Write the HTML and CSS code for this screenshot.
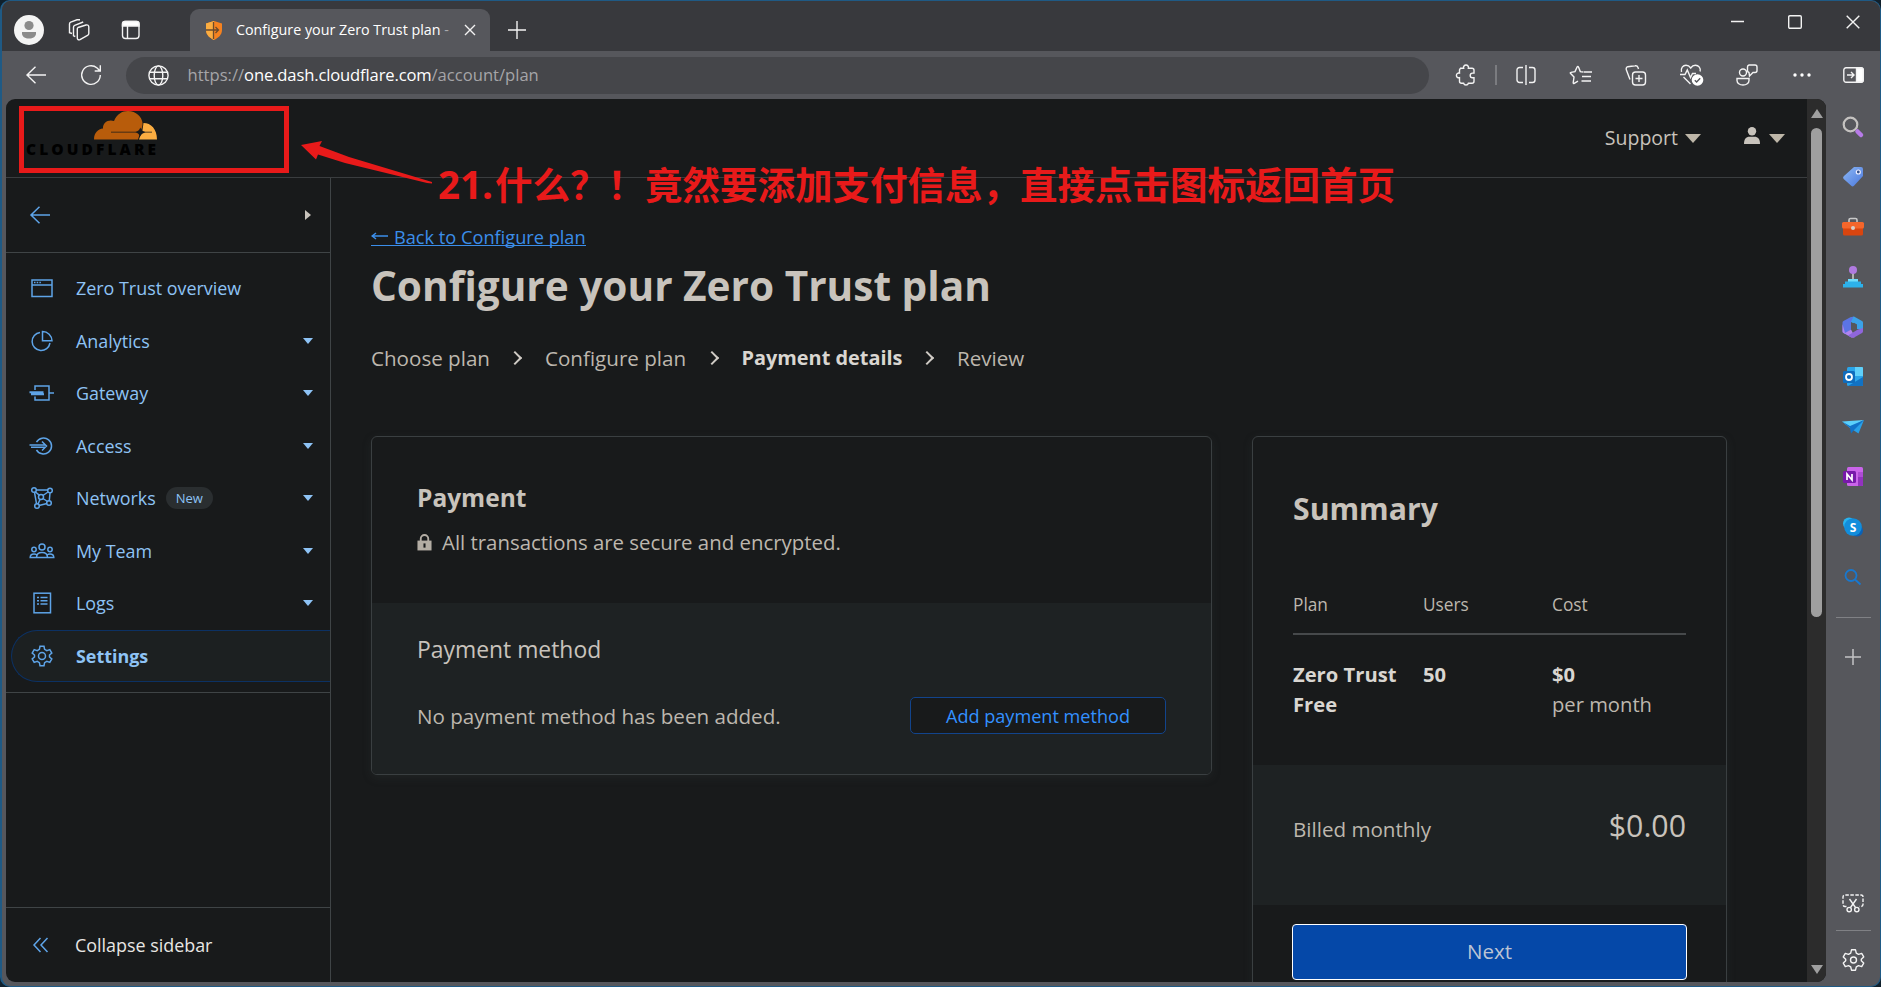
FILE: index.html
```
<!DOCTYPE html>
<html lang="en">
<head>
<meta charset="utf-8">
<title>Configure your Zero Trust plan</title>
<link rel="stylesheet" href="styles.css">
</head>
<body>
<div class="window">
  <header class="titlebar">
    <div class="tb-cell tb-avatar"><svg width="30" height="30" viewBox="0 0 30 30"><circle cx="15" cy="15" r="15" fill="#f4f4f4"/><circle cx="15" cy="10.500" r="4.600" fill="#8b8b8b"/><path d="M8 17h14v1.500c0 3-3 5-7 5s-7-2-7-5z" fill="#8b8b8b"/></svg></div>
    <div class="tb-cell tb-work"><svg class="ln" width="22" height="22" viewBox="0 0 22 22"><path d="M10 8.500l8-2.500c1.800-.4 2.800.3 2.800 2v6.400a2 2 0 0 1-1.300 1.900l-7.500 4.400c-1.500.6-2.700-.2-2.700-1.800V10a1.500 1.500 0 0 1 .7-1.500zM7.300 17.500l-1.800-.7V8.200a2 2 0 0 1 1.200-1.900l8.500-3.300M4 14.500l-2.500-.8V5a2 2 0 0 1 1.200-1.900L9 .8h3"/></svg></div>
    <div class="tb-cell tb-vert"><svg class="ln" width="20" height="20" viewBox="0 0 20 20"><rect x="1.500" y="1.500" width="16.500" height="17" rx="3"/><path d="M1.500 6V3.500a2 2 0 0 1 2-2h12.500a2 2 0 0 1 2 2V6z" fill="#fff"/><path d="M6.500 6v12"/></svg></div>
    <div class="tab">
      <svg width="16" height="19" viewBox="0 0 16 19"><path d="M8 0l8 2.500V9c0 5-4 8-8 10C4 17 0 14 0 9V2.500z" fill="#f6821f"/><path d="M8 0v19C4 17 0 14 0 9V2.500z" fill="#fbad41"/><path d="M0 9h12M9.500 6l3 3-3 3M7.500 1v17" fill="none" stroke="#6b4a2c" stroke-width="1.300"/></svg>
      <span class="tab-title">Configure your Zero Trust plan <span>-</span></span>
      <svg class="ln" width="12" height="12" viewBox="0 0 12 12"><path d="M1 1l10 10M11 1L1 11"/></svg>
    </div>
    <div class="tb-plus"><svg class="ln" width="18" height="18" viewBox="0 0 18 18"><path d="M9 0v18M0 9h18"/></svg></div>
    <div class="win-controls">
      <svg class="ln" width="13" height="13" viewBox="0 0 13 13"><path d="M0 6.500h13"/></svg>
      <svg class="ln" width="14" height="14" viewBox="0 0 14 14"><rect x=".7" y=".7" width="12.600" height="12.600" rx="1.200"/></svg>
      <svg class="ln" width="14" height="14" viewBox="0 0 14 14"><path d="M.7.7l12.600 12.600M13.300.7L.7 13.300"/></svg>
    </div>
  </header>

  <div class="toolbar">
    <div class="tool-back"><svg class="ln" width="20" height="18" viewBox="0 0 20 18"><path d="M20 9H1M9.500.8L1 9l8.500 8.200"/></svg></div>
    <div class="tool-reload"><svg class="ln" width="22" height="22" viewBox="0 0 22 22"><path d="M20.300 11a9.300 9.300 0 1 1-3.200-7l2.700 2.700M20.300 1.200V7h-5.600"/></svg></div>
    <div class="address">
      <svg class="ln" width="21" height="21" viewBox="0 0 21 21"><circle cx="10.500" cy="10.500" r="9.600"/><ellipse cx="10.500" cy="10.500" rx="4.300" ry="9.600"/><path d="M1.600 7.200h17.800M1.600 13.800h17.800"/></svg>
      <span class="url">https://<b>one.dash.cloudflare.com</b>/account/plan</span>
    </div>
    <div class="tool-ext"><svg class="ln" width="20" height="22" viewBox="0 0 20 22"><path d="M4 4.200h3.600a2.500 2.500 0 1 1 4.800 0H16a2 2 0 0 1 2 2v2.900h-1.500a2.300 2.300 0 0 0 0 4.600H18v3.500a2 2 0 0 1-2 2h-3.600a2.500 2.500 0 0 1-4.800 0H5.500a2 2 0 0 1-2-2v-3.500a2.400 2.400 0 1 1 0-4.600V6.200a2 2 0 0 1 2-2"/></svg></div>
    <i class="tool-sep"></i>
    <div class="tools">
      <span><svg class="ln" width="20" height="20" viewBox="0 0 20 20"><path d="M7 2.500H3.500a2.500 2.500 0 0 0-2.500 2.500v10a2.500 2.500 0 0 0 2.500 2.500H7M13 2.500h3.500A2.500 2.500 0 0 1 19 5v10a2.500 2.500 0 0 1-2.500 2.500H13M10 0v20"/></svg></span>
      <span><svg class="ln" width="22" height="20" viewBox="0 0 22 20"><path d="M13 7l-2.700-.4L8.500 2c-.3-.9-1-.9-1.400 0L5 6.600l-4.200.8c-.6.100-.6.700-.2 1.100L4 12l-.8 5.700c0 .8.400 1 1 .7L8 16.200M13.500 7H22M12 11.500h9M11.500 16H21"/></svg></span>
      <span><svg class="ln" width="22" height="21" viewBox="0 0 22 21"><rect x="7.500" y="7" width="13" height="13" rx="3"/><path d="M14 10v7M10.500 13.500h7M5 14.500L1.300 4.700a2.300 2.300 0 0 1 1.500-3L10 .8c1.500-.3 2.500.3 3 1.600l.5 1.600"/></svg></span>
      <span><svg class="ln" width="24" height="22" viewBox="0 0 24 22"><path d="M1.500 8C.5 4 3 1.300 6 1.300c2.300 0 3.700 1.300 4.700 2.700 1-1.400 2.500-2.700 4.700-2.700 3.300 0 5.600 3 4.700 6.200M3.500 13l7 7M0 10.500h5l2.300-4.500 3.200 7.500 2-4H16"/><circle cx="17.500" cy="16" r="5.800" fill="#fff" stroke="none"/><path d="M14.800 16.300l1.800 1.700 3.600-3.700" stroke="#55565b"/></svg></span>
      <span><svg class="ln" width="22" height="22" viewBox="0 0 22 22"><circle cx="7" cy="8.500" r="3.500"/><path d="M1 14.500h12v2c0 2.500-2.600 4.500-6 4.500s-6-2-6-4.500zM13 1h6a2 2 0 0 1 2 2v3.500a2 2 0 0 1-2 2h-2L13.500 12 13 8.500A2 2 0 0 1 11.500 6.500V3A2 2 0 0 1 13 1z"/></svg></span>
      <span><svg width="18" height="4" viewBox="0 0 18 4" fill="#fff"><circle cx="2" cy="2" r="1.700"/><circle cx="9" cy="2" r="1.700"/><circle cx="16" cy="2" r="1.700"/></svg></span>
    </div>
    <div class="tool-panel"><svg class="ln" width="21" height="16" viewBox="0 0 21 16"><rect x=".8" y=".8" width="19.400" height="14.400" rx="2.200"/><path d="M13.500 1h5a1.700 1.700 0 0 1 1.700 1.700v10.600a1.700 1.700 0 0 1-1.700 1.700h-5z" fill="#fff"/><path d="M4 8h7M8 5l3 3-3 3"/></svg></div>
  </div>

  <div class="main">
    <div class="page">
      <div class="site">
        <div class="site-head">
          <div class="logo">
            <svg width="63" height="29" viewBox="0 0 63 29"><path d="M0 28.500C0 22 4 18 9 17.600 8.500 12 14 8 20 10 23 3 28 0 34 0c8 0 14 6 14.500 12 .2 2.500-.6 5-1.500 7l-3 9.500z" fill="#b85c0b"/><path d="M49.500 12C57 12 63 18 63 28.500H45l2-5.500 1.500-4z" fill="#fbad41"/><path d="M17 20.800h24.500c2.500-.3 3.800-1.700 4.800-4.300 1 2.600 2.500 4 5 4.300H58v.8h-6.500c-2.500.3-4.200 1.700-5.500 4-1-2.300-2-3.700-4.500-4H17z" fill="#181a1b"/></svg>
            <span>CLOUDFLARE</span>
          </div>
          <div class="head-menu"><span class="support">Support</span><i class="tri"></i>
            <svg class="user" width="16" height="17" viewBox="0 0 16 17" fill="#c8c3bc"><circle cx="8" cy="4.300" r="4.200"/><path d="M0 17c0-5 2-7.200 5.500-7.200h5C14 9.800 16 12 16 17z"/></svg><i class="tri"></i></div>
        </div>
        <div class="site-body">
          <nav class="side">
            <div class="side-top"><svg class="bl" width="20" height="18" viewBox="0 0 20 18"><path d="M20 9H1M9.500.8L1 9l8.500 8.200"/></svg><i class="tri-right"></i></div>
            <div class="side-list">
              <a class="item"><svg class="bl" width="26" height="22" viewBox="0 0 26 22"><rect x="3" y="3" width="20" height="16.500"/><path d="M3 8h20"/><path d="M5 5.500h7" stroke-dasharray="1.500 1.200"/></svg><span>Zero Trust overview</span></a>
              <a class="item"><svg class="bl" width="26" height="22" viewBox="0 0 26 22"><path d="M11 2.500a9 9 0 1 0 10 10.500M13.500 1.500v9.300H23a9.500 9.500 0 0 0-9.500-9.300z"/></svg><span>Analytics</span><i class="caret"></i></a>
              <a class="item"><svg class="bl" width="26" height="22" viewBox="0 0 26 22"><path d="M6 8V4h14v14H6v-3.500M20 11h5"/><path d="M.5 10.300h14M2 12.200h13" stroke-width="2"/></svg><span>Gateway</span><i class="caret"></i></a>
              <a class="item"><svg class="bl" width="26" height="22" viewBox="0 0 26 22"><path d="M7.500 7.200a8 8 0 1 1 0 7.600M13 6.500l4.500 4.500-4.500 4.500M.5 10h16M2 12.200h15"/></svg><span>Access</span><i class="caret"></i></a>
              <a class="item"><svg class="bl" width="26" height="24" viewBox="0 0 26 24"><circle cx="5" cy="4" r="2.300"/><circle cx="21" cy="4.500" r="2.300"/><circle cx="8" cy="20" r="2.300"/><circle cx="20" cy="17" r="2.300"/><circle cx="12" cy="11" r="2.500"/><path d="M7 4h12M5.500 6.300L7.500 17.700M10 19.500l8-2M21 7l-.7 7.700M6.500 6l4 3.300M19 6l-5 3.500M11 13.500l-2 4.500M14 12.500l4.500 3"/></svg><span>Networks</span><em class="badge">New</em><i class="caret"></i></a>
              <a class="item"><svg class="bl" width="26" height="22" viewBox="0 0 26 22"><circle cx="13" cy="7" r="3"/><circle cx="5" cy="9.500" r="2.200"/><circle cx="21" cy="9.500" r="2.200"/><path d="M7.500 17.500c0-4 2-5 5.500-5s5.500 1 5.500 5zM7 17.500H1.200c0-3 1.300-3.500 3.800-3.500 1 0 2 .2 2.700.8M19 17.500h5.800c0-3-1.300-3.500-3.800-3.500-1 0-2 .2-2.700.8"/></svg><span>My Team</span><i class="caret"></i></a>
              <a class="item"><svg class="bl" width="26" height="22" viewBox="0 0 26 22"><rect x="5" y="1.200" width="16.500" height="19.600"/><path d="M8 5.500h2M11.500 5.500h7M8 8.800h2M11.500 8.800h7M8 12h2M11.500 12h7"/></svg><span>Logs</span><i class="caret"></i></a>
              <a class="item active"><svg class="bl" width="26" height="22" viewBox="0 0 26 22"><circle cx="13" cy="11" r="3.500"/><path d="M11 1.300h4l.6 3 2.200 1.300 3-1 2 3.400-2.300 2v2l2.300 2-2 3.400-3-1-2.200 1.300-.6 3h-4l-.6-3-2.200-1.300-3 1-2-3.400 2.300-2v-2l-2.300-2 2-3.400 3 1 2.200-1.300z"/></svg><span>Settings</span></a>
            </div>
            <div class="collapse"><svg class="bl" width="26" height="16" viewBox="0 0 26 16"><path d="M12.500 1L6 8l6.500 7M19.500 1L13 8l6.500 7"/></svg><span>Collapse sidebar</span></div>
          </nav>
          <main class="content">
            <a class="back"><svg width="18" height="10" viewBox="0 0 18 10"><path d="M1 4h16M5 1L1.200 4 5 7" fill="none" stroke="#3b8eea" stroke-width="1.500"/></svg><span>Back to Configure plan</span></a>
            <h1>Configure your Zero Trust plan</h1>
            <ol class="steps">
              <li class="s1">Choose plan</li><li class="chev"></li>
              <li class="s2">Configure plan</li><li class="chev"></li>
              <li class="s3">Payment details</li><li class="chev"></li>
              <li>Review</li>
            </ol>
            <div class="cards">
              <section class="card pay">
                <div class="pay-top">
                  <h2>Payment</h2>
                  <p class="secure"><svg width="15" height="18" viewBox="0 0 16 18"><path d="M4 8V5.500a4 4 0 0 1 8 0V8" fill="none" stroke="#b3ada4" stroke-width="2"/><rect x="0.500" y="7.500" width="15" height="10.500" fill="#b3ada4"/><path d="M8 10.500v4.500" stroke="#181a1b" stroke-width="2.200"/></svg><span>All transactions are secure and encrypted.</span></p>
                </div>
                <div class="pay-bottom">
                  <h3>Payment method</h3>
                  <div class="pay-row"><span>No payment method has been added.</span><button class="add">Add payment method</button></div>
                </div>
              </section>
              <section class="card sum">
                <h2>Summary</h2>
                <div class="row head"><span>Plan</span><span>Users</span><span>Cost</span></div>
                <div class="row data"><b>Zero Trust Free</b><b>50</b><span><b>$0</b><br>per month</span></div>
                <div class="bill"><span>Billed monthly</span><span class="total">$0.00</span></div>
                <div class="next-wrap"><button class="next">Next</button></div>
              </section>
            </div>
          </main>
        </div>
      </div>
      <div class="scroll"><i class="up"></i><i class="thumb"></i><i class="down"></i></div>
    </div>
    <aside class="rail">
      <span><svg width="22" height="22" viewBox="0 0 22 22"><circle cx="8.500" cy="8.500" r="6.800" fill="none" stroke="#c4c2c0" stroke-width="2.200"/><path d="M15.500 15.500l3.500 3.500" stroke="#b77be8" stroke-width="4.500" stroke-linecap="round"/></svg></span>
      <span><svg width="22" height="22" viewBox="0 0 22 22"><defs><linearGradient id="tg" x2="1" y2="1"><stop stop-color="#8db8f5"/><stop offset="1" stop-color="#4b78dc"/></linearGradient></defs><path d="M12 1h7a2 2 0 0 1 2 2v7l-9 9.800a2 2 0 0 1-2.800 0L1.700 13a2 2 0 0 1 0-2.800z" fill="url(#tg)"/><circle cx="16.300" cy="6" r="2" fill="#35528c" stroke="#eef" stroke-width="1.200"/></svg></span>
      <span><svg width="24" height="20" viewBox="0 0 24 20"><path d="M8 5V3a1.500 1.500 0 0 1 1.500-1.500h5A1.500 1.500 0 0 1 16 3v2" fill="none" stroke="#c9c9c9" stroke-width="1.600"/><rect x="2" y="9" width="20" height="9.500" rx="1.500" fill="#d9450f"/><rect x="1" y="5" width="22" height="6.500" rx="1.500" fill="#f4662b"/><circle cx="12" cy="11" r="2" fill="#d8cfc9"/></svg></span>
      <span><svg width="22" height="24" viewBox="0 0 22 24"><path d="M11 6v9" stroke="#bbb" stroke-width="1.800"/><circle cx="11" cy="5" r="4" fill="#b07ae0"/><path d="M6 14h10v2.500h3V19h2v3.500H1V19h2v-2.500h3z" fill="#2db1ea"/><path d="M6 14h10v2.500H6z" fill="#6fdcfb"/></svg></span>
      <span><svg width="22" height="22" viewBox="0 0 22 22"><path d="M7 2l5-1.500L20 5a2 2 0 0 1 1 2v7l-6-1V9L9 6z" fill="#3ba2e8"/><path d="M7 2l4.500-1.500L9 6v7.500L3 18l-1.500-1a2 2 0 0 1-1-2V7a2 2 0 0 1 1-2z" fill="#5b74e4"/><path d="M.5 8v7a2 2 0 0 0 1 2l7 4c1.500.8 3 .8 4.500 0L9 13.500 3 17z" fill="#b184ee"/><path d="M21 12v3a2 2 0 0 1-1 2l-7 4c-1.500.8-3 .8-4.500 0L6 19.500 15 14z" fill="#8f66dc"/><path d="M9 8.500l3-1.700 3 1.700V13l-3 1.700L9 13z" fill="#56575c"/></svg></span>
      <span><svg width="22" height="20" viewBox="0 0 22 20"><rect x="5" y="0" width="16" height="19" rx="1.500" fill="#2aa5ea"/><path d="M13 0h7a1 1 0 0 1 1 1v8h-8z" fill="#5fd0fa"/><path d="M6 19l15-9v8a1 1 0 0 1-1 1z" fill="#1172c4"/><rect x="1" y="4" width="12" height="12" rx="1.500" fill="#0f6cbd"/><circle cx="7" cy="10" r="3" fill="none" stroke="#fff" stroke-width="1.800"/></svg></span>
      <span><svg width="22" height="16" viewBox="0 0 22 16"><path d="M0 2.500L22 1 8 9z" fill="#5bd0fb"/><path d="M8 9l14-8-5.500 13.500z" fill="#28a0e8"/><path d="M0 2.500L8 9l1 5.500L12 11l10-10L8 7z" fill="#1272c8"/></svg></span>
      <span><svg width="21" height="20" viewBox="0 0 21 20"><rect x="4" y="0" width="16" height="19" rx="1.500" fill="#ca64ea"/><path d="M15 5h5v5h-5z" fill="#ae4bd5"/><path d="M15 10h5v8a1 1 0 0 1-1 1h-4z" fill="#9332bf"/><rect x="0" y="4" width="13" height="12" rx="1.500" fill="#7719aa"/><path d="M4 13V7l5 6V7" fill="none" stroke="#fff" stroke-width="1.700"/></svg></span>
      <span><svg width="22" height="20" viewBox="0 0 22 20"><circle cx="7" cy="6.500" r="6" fill="#28b4f0"/><circle cx="15" cy="13.500" r="6" fill="#0a62b8"/><circle cx="11" cy="10" r="8.800" fill="#128edc"/><text class="glyph" x="11" y="14.500">S</text></svg></span>
      <span><svg width="18" height="16" viewBox="0 0 18 16"><circle cx="7" cy="6.500" r="5.500" fill="none" stroke="#1878cf" stroke-width="1.800"/><path d="M11 10.500l5.500 5" stroke="#1878cf" stroke-width="1.900"/></svg></span>
      <i class="rail-line first"></i>
      <span class="rail-plus"><svg width="16" height="16" viewBox="0 0 16 16"><path d="M8 0v16M0 8h16" stroke="#c3c3c5" stroke-width="1.500"/></svg></span>
      <span class="rail-shot"><svg class="ln" width="22" height="19" viewBox="0 0 22 19"><path d="M4.500 12.500H3a2 2 0 0 1-2-2V3a2 2 0 0 1 2-2h16a2 2 0 0 1 2 2v7.500a2 2 0 0 1-2 2h-1.500" stroke-dasharray="3.500 1.500"/><path d="M7.500 5l6 8.500M14.500 5l-6 8.500"/><circle cx="7.200" cy="15.600" r="2.200"/><circle cx="14.800" cy="15.600" r="2.200"/></svg></span>
      <i class="rail-line"></i>
      <span class="rail-gear"><svg class="ln" width="23" height="22" viewBox="1.500 0 23 22"><circle cx="13" cy="11" r="3"/><path stroke-linejoin="round" d="M11 .8h4l.8 3.300 2.200 1.300 3.200-1 2 3.500-2.400 2.300v1.600l2.400 2.300-2 3.500-3.200-1-2.200 1.300-.8 3.300h-4l-.8-3.300-2.200-1.300-3.200 1-2-3.500 2.400-2.300v-1.600L2.800 7.900l2-3.500 3.200 1 2.200-1.300z"/></svg></span>
    </aside>
  </div>
</div>
<div class="mark-box"></div>
<svg class="mark-arrow" width="133" height="44" viewBox="0 0 133 44"><path d="M1 5L22 1l-2.500 5L49 17 132 42l0 1.500-5-.5L45 23 18 14.500l-2 5z" fill="#e81a1a"/></svg>
<div class="mark-text"><span>21.</span>什么？！竟然要添加支付信息，直接点击图标返回首页</div>
</body>
</html>
```
FILE: styles.css
```
* { box-sizing: border-box; }
body { margin: 0; width: 1881px; height: 987px; overflow: hidden; background: #10202c; font-family: "Open Sans", "Noto Sans", sans-serif; color: #bdb7ae; }
h1, h2, h3, p, ol { margin: 0; padding: 0; }
i { font-style: normal; display: block; }
svg { display: block; flex: none; overflow: visible; }
button { font-family: inherit; padding: 0; }

.window { width: 1881px; height: 987px; display: flex; flex-direction: column; border: 1px solid #1f5a85; border-left-width: 2px; border-radius: 10px; background: #56575c; overflow: hidden; }
.ln { fill: none; stroke: #f3f3f3; stroke-width: 1.4; }
.bl { fill: none; stroke: #5ea4e8; stroke-width: 1.5; }

.titlebar { height: 50px; flex: none; display: flex; background: #38393d; }
.tb-cell { height: 58px; display: flex; align-items: center; justify-content: center; }
.tb-avatar { width: 54px; }
.tb-work { width: 46px; }
.tb-vert { width: 58px; }
.tab { width: 300px; height: 42px; margin: 8px 0 0 30px; padding: 0 14px 0 16px; display: flex; align-items: center; background: #56575c; border-radius: 9px 9px 0 0; }
.tab-title { width: 216px; margin: 0 13px 0 14px; white-space: nowrap; font-size: 14.3px; line-height: 24px; color: #fff; }
.tab-title span { color: #a9aaad; }
.tb-plus { height: 58px; margin-left: 18px; display: flex; align-items: center; }
.win-controls { margin-left: auto; height: 41px; padding-right: 20px; display: flex; align-items: center; gap: 44px; }

.toolbar { height: 48px; flex: none; display: flex; align-items: center; }
.tool-back { width: 67px; display: flex; justify-content: center; }
.tool-reload { width: 43px; display: flex; justify-content: center; }
.address { width: 1303px; height: 37px; margin-left: 14px; padding-left: 22px; display: flex; align-items: center; gap: 18.500px; background: #45464a; border-radius: 19px; }
.url { font-size: 16.600px; line-height: 24px; color: #a5a5a8; white-space: nowrap; }
.url b { font-weight: 400; color: #fff; letter-spacing: -.15px; }
.tool-ext { width: 20px; margin-left: 27px; }
.tool-sep { width: 2px; height: 20px; margin-left: 19px; background: #7b7c80; }
.tools { display: flex; margin-left: 1px; }
.tools span { width: 55.3px; height: 22px; display: flex; align-items: center; justify-content: center; }
.tool-panel { flex: 1; display: flex; justify-content: center; padding-right: 2px; }

.main { height: 883px; display: flex; }
.page { width: 1820px; height: 883px; margin-left: 4px; display: flex; flex: none; border-radius: 9px; overflow: hidden; background: #181a1b; }
.site { width: 1801px; display: flex; flex-direction: column; }
.site-head { height: 79px; flex: none; display: flex; justify-content: space-between; border-bottom: 1px solid #3a3d3f; }
.logo { width: 131px; margin: 12px 0 0 20px; display: flex; flex-direction: column; align-items: flex-end; }
.logo span { width: 131px; margin-top: 1px; font-size: 15.5px; font-weight: 800; letter-spacing: 3.1px; line-height: 17px; color: #000; white-space: nowrap; }
.head-menu { height: 78px; padding-right: 22px; display: flex; align-items: center; }
.support { font-size: 19.500px; line-height: 24px; color: #c8c3bc; }
.tri { width: 0; height: 0; margin-left: 7px; border: 8.500px solid transparent; border-top: 9px solid #bdb6a8; border-bottom: 0; }
.user { margin: -5px 2px 0 43px; }

.site-body { height: 804px; display: flex; }
.side { width: 325px; height: 804px; display: flex; flex-direction: column; border-right: 1px solid #3f4446; }
.side-top { height: 75px; padding: 0 19px 1px 24px; display: flex; align-items: center; justify-content: space-between; border-bottom: 1px solid #3f4446; }
.tri-right { border: 5.500px solid transparent; border-left: 6px solid #c8c3bc; border-right: 0; }
.side-list { padding: 9px 0 10px 5px; border-bottom: 1px solid #3f4446; }
.item { height: 52.5px; padding: 0 17.500px 0 17.500px; display: flex; align-items: center; font-size: 17.900px; line-height: 24px; color: #8ec3f5; }
.item span { margin-left: 21.500px; }
.item.active { border: 1px solid #0c3163; border-right: 0; border-radius: 26px 0 0 26px; background: #1c2021; font-weight: 700; padding-left: 16.500px; }
.caret { margin-left: auto; border: 5px solid transparent; border-top: 6px solid #8ec3f5; border-bottom: 0; }
.badge { width: 47px; margin-left: 10px; border-radius: 11px; background: #2a2e30; font-style: normal; font-size: 13px; line-height: 22px; text-align: center; font-weight: 500; }
.collapse { height: 75px; margin-top: auto; padding: 0 0 0 22px; display: flex; align-items: center; gap: 21px; border-top: 1px solid #3f4446; font-size: 17.900px; color: #e8e6e3; }

.content { padding: 46px 0 0 40px; }
.back { width: max-content; height: 26px; display: flex; align-items: center; gap: 5px; font-size: 18.200px; line-height: 22px; color: #3b8eea; text-decoration: none; background: linear-gradient(#3b8eea, #3b8eea) 0 21px / 100% 1px no-repeat; }
h1 { margin-top: 9px; font-size: 40.600px; line-height: 54px; font-weight: 700; color: #c8c3bc; white-space: nowrap; }
.steps { height: 30px; margin-top: 30px; display: flex; align-items: center; list-style: none; font-size: 20.600px; line-height: 30px; white-space: nowrap; }
.s1 { width: 141px; }
.s2 { width: 163.500px; }
.s3 { width: 182.500px; font-size: 19.900px; font-weight: 700; color: #d9d6d1; }
.chev { width: 10px; height: 10px; margin: 0 25px 0 -2px; border: solid #d0ccc6; border-width: 2px 2px 0 0; transform: rotate(45deg); }
.cards { margin-top: 63px; display: flex; align-items: flex-start; gap: 40px; }
.card { border: 1px solid #3a3f41; border-radius: 6px; background: #181a1b; overflow: hidden; box-shadow: 0 3px 10px rgba(60, 70, 70, .22); }
.pay { width: 841px; height: 339px; }
.pay-top { height: 166px; padding: 45px 45px 0; }
.pay h2 { font-size: 24.500px; line-height: 32px; color: #c8c3bc; }
.secure { margin-top: 13px; display: flex; align-items: center; gap: 10px; font-size: 20.400px; line-height: 30px; }
.pay-bottom { height: 171px; padding: 31px 45px 0; background: #1e2223; }
h3 { font-size: 22.900px; line-height: 32px; font-weight: 400; color: #c8c3bc; }
.pay-row { margin-top: 31px; display: flex; align-items: center; justify-content: space-between; font-size: 20.600px; line-height: 36px; }
.add { width: 256px; height: 37px; border: 1px solid #12448c; border-radius: 5px; background: #181a1b; color: #3391ff; font-size: 18.100px; }
.sum { width: 475px; height: 600px; padding-top: 52px; }
.sum h2 { margin-left: 40px; font-size: 30.200px; line-height: 40px; color: #c8c3bc; }
.row { margin: 0 40px; display: grid; grid-template-columns: 130px 129px 1fr; }
.head { margin-top: 61px; height: 45px; border-bottom: 2px solid #46494b; font-size: 17.300px; line-height: 30px; }
.data { height: 129.500px; padding-top: 23.500px; font-size: 20.200px; line-height: 30px; }
.data b { color: #d9d6d1; }
.data > b:first-child { width: 110px; }
.bill { height: 140.500px; padding: 42.500px 40px 0; display: flex; justify-content: space-between; background: #1e2223; font-size: 20.600px; line-height: 44px; }
.total { font-size: 30.300px; line-height: 38px; color: #c8c3bc; }
.next-wrap { padding: 19px 39px; }
.next { width: 395px; height: 56px; border: 1.500px solid #fff; border-radius: 4px; background: #0548a8; color: #bcc4d4; font-size: 20.500px; font-weight: 500; line-height: 50px; padding-bottom: 2px; }

.scroll { width: 19px; padding: 10px 0 8px; display: flex; flex-direction: column; align-items: center; background: #2c2c2c; }
.up { border: 6.500px solid transparent; border-bottom: 9px solid #9f9f9f; border-top: 0; }
.thumb { width: 11px; height: 489px; margin-top: 10px; border-radius: 6px; background: #9f9f9f; }
.down { margin-top: auto; border: 6.500px solid transparent; border-top: 9px solid #9f9f9f; border-bottom: 0; }

.rail { flex: 1; padding: 3px 0 0; display: flex; flex-direction: column; align-items: center; }
.rail span { width: 54px; height: 50px; display: flex; align-items: center; justify-content: center; }
.rail-line { width: 35px; height: 1px; flex: none; background: #808185; }
.rail-line.first { margin-top: 15px; }
.rail .rail-plus { margin-top: 14px; }
.rail .rail-shot { margin-top: auto; height: 54px; }
.rail .rail-gear { height: 50px; margin-bottom: 1px; padding-top: 8px; }
.glyph { font: 700 12px "Open Sans", sans-serif; fill: #fff; text-anchor: middle; }

.mark-box { position: absolute; left: 19px; top: 106px; width: 270px; height: 67px; border: 5px solid #e81a1a; }
.mark-arrow { position: absolute; left: 300px; top: 140px; }
.mark-text { position: absolute; left: 438px; top: 158px; font: 700 37.500px/50px "Noto Sans CJK SC", sans-serif; color: #e81a1a; white-space: nowrap; }
.mark-text span { display: inline-block; width: 57px; font-family: "Open Sans", sans-serif; font-size: 38.500px; line-height: 50px; }
```
